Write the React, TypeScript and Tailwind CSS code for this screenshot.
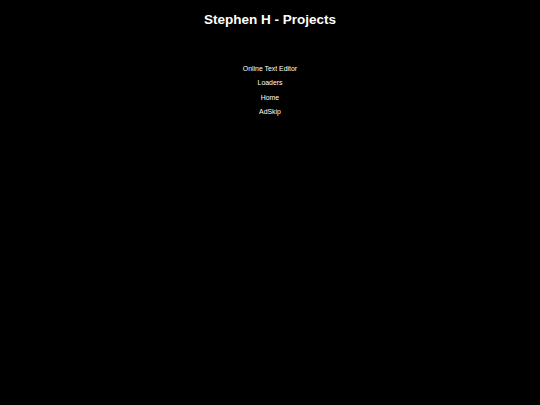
export default function App() {
  const links = ["Online Text Editor", "Loaders", "Home", "AdSkip"];
  return (
    <main className="min-h-screen w-full bg-black text-white font-['Liberation_Sans',Arial,sans-serif]">
      <h1 className="pt-[11px] text-center text-[13.5px] font-bold leading-[18px]">Stephen H - Projects</h1>
      <ul className="mt-[33px] flex flex-col items-center">
        {links.map((l) => (
          <li key={l} className="h-[14.3px] text-[6.9px] leading-[14.3px]">
            <a href="#" className="text-white">
              {l}
            </a>
          </li>
        ))}
      </ul>
    </main>
  );
}
